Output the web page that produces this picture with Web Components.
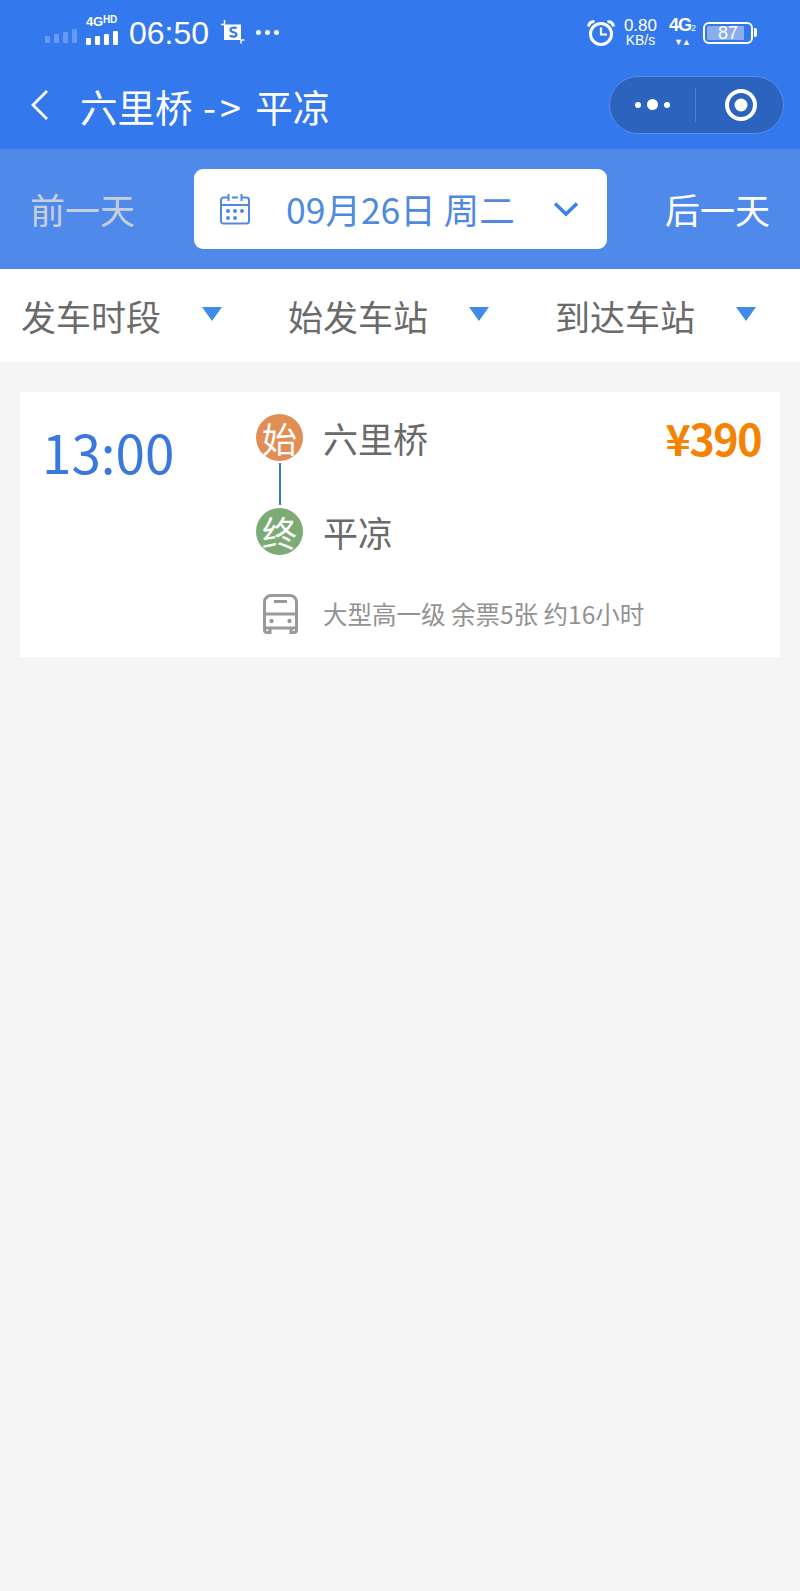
<!DOCTYPE html>
<html lang="zh-CN"><head><meta charset="utf-8"><title>车票</title>
<style>
html,body{margin:0;padding:0;background:#f5f5f5;height:100%}
body{font-family:"Noto Sans CJK SC","Noto Sans",sans-serif;width:800px;min-height:1591px}
</style></head><body>
<app-header></app-header>
<date-bar></date-bar>
<filter-bar></filter-bar>
<ticket-card></ticket-card>
<script>
const def=(name,html)=>customElements.define(name,class extends HTMLElement{
  constructor(){super();this.attachShadow({mode:'open'}).innerHTML=html}
});
def('status-bar',`<style>
:host{display:flex;height:65px;align-items:flex-start;color:#fff;font-family:"Liberation Sans",sans-serif;box-sizing:border-box}
.l,.r{display:flex;align-items:center;height:65px}
.l{padding-left:45px}.r{margin-left:auto;padding-right:43px}
.bars{display:flex;align-items:flex-end;gap:4px;height:15px;margin-top:5px}
.bars i{display:block;width:5px;background:#fff;border-radius:1px}
.faint{opacity:.25}
.sig{display:flex;flex-direction:column;margin-left:9px;width:32px;margin-top:-6px}
.sig b{font-size:13px;line-height:11px;white-space:nowrap;letter-spacing:-.2px}
.sig b small{font-size:10px;vertical-align:3px}
.sig .bars{margin-top:3px}
.time{font-size:32px;line-height:36px;margin-left:11px;font-weight:400}
.dots{margin-left:11px;display:flex;gap:4px}.dots i{width:5px;height:5px;border-radius:50%;background:#fff;display:block}
.net{display:flex;flex-direction:column;align-items:center;margin-left:9px;line-height:16px;font-size:17px;margin-top:-1px}
.net small{font-size:14px;line-height:13px}
.g{display:flex;flex-direction:column;align-items:center;margin-left:12px;width:26px;margin-top:-3px}
.g b{font-size:18px;line-height:19px;letter-spacing:-1px;white-space:nowrap}.g small{font-size:9px;font-weight:400}
.g em{font-size:9px;font-style:normal;line-height:9px;letter-spacing:-1px}
.bat{display:flex;align-items:center;margin-left:8px}
.bat .box{box-sizing:border-box;width:50px;height:22px;border:2px solid #fff;border-radius:6px;padding:2px;display:flex;align-items:center;justify-content:center;font-size:18px;line-height:18px}
.bat .box span{display:block;text-align:center;width:100%;background:linear-gradient(90deg,rgba(225,225,235,.5) 87%,transparent 87%);height:14px;line-height:15px;border-radius:2px}
.bat u{display:block;width:3px;height:9px;background:#fff;border-radius:0 2px 2px 0;margin-left:1px}
</style>
<div class="l">
 <div class="bars faint"><i style="height:7px"></i><i style="height:9px"></i><i style="height:11px"></i><i style="height:14px"></i></div>
 <div class="sig"><b>4G<small>HD</small></b><div class="bars"><i style="height:7px"></i><i style="height:9px"></i><i style="height:11px"></i><i style="height:14px"></i></div></div>
 <span class="time">06:50</span>
 <svg style="margin-left:12px;margin-top:-1px" width="24" height="24" viewBox="0 0 24 24"><path d="M3 4.500h17v15.500H3z" fill="#fff"/><path d="M3.500 0v4.500M0 4.500h3.500M20 20v3.500M20 20h3.500" stroke="#fff" stroke-width="1.500" fill="none"/><path d="M15.500 8.500c-1-1-6-1.500-6 1.500 0 3 6 1.500 6 4.500 0 3-5.500 2.300-6.800 1" stroke="#3478ee" stroke-width="2.200" fill="none"/></svg>
 <div class="dots"><i></i><i></i><i></i></div>
</div>
<div class="r">
 <svg width="28" height="28" viewBox="0 0 28 28" fill="none" stroke="#fff"><circle cx="14" cy="15" r="10.500" stroke-width="3"/><path d="M14 8.500V15.500H20" stroke-width="2.200"/><path d="M1.500 7.500C2 4 4.500 2.500 7.500 2.500M26.500 7.500C26 4 23.500 2.500 20.500 2.500" stroke-width="3"/></svg>
 <div class="net"><span>0.80</span><small>KB/s</small></div>
 <div class="g"><b>4G<small>2</small></b><em>▼▲</em></div>
 <div class="bat"><div class="box"><span>87</span></div><u></u></div>
</div>`);
def('nav-bar',`<style>
:host{display:flex;height:84px;align-items:center;color:#fff;box-sizing:border-box;padding-left:30px}
svg{display:block;flex:none}
.t{font-size:37.500px;line-height:44px;margin-left:30px;margin-top:-3px;font-weight:400;white-space:pre;word-spacing:2px}
.t i{font-style:normal;letter-spacing:4px}
.cap{margin-left:auto;margin-right:16px;margin-top:-5px;box-sizing:border-box;width:175px;height:58px;border-radius:29px;background:#2c63bf;border:1px solid #5b8de0;display:flex;align-items:center}
.a,.b{flex:1;display:flex;align-items:center;justify-content:center;height:34px}
.a{gap:6px;border-right:1px solid #4d7fd2}
.a i{display:block;background:#fff;border-radius:50%;width:6px;height:6px}.a i.m{width:11px;height:11px}
.b{padding-left:3px}
.b svg{display:block}
</style>
<svg width="20" height="34" viewBox="0 0 20 34" fill="none" stroke="#fff" stroke-width="2.800" style="margin-top:-5px"><path d="M17 3 L3 17 L17 31"/></svg>
<span class="t">六里桥 <i>-&gt;</i> 平凉</span>
<div class="cap"><div class="a"><i></i><i class="m"></i><i></i></div><div class="b"><svg width="34" height="34" viewBox="0 0 34 34"><circle cx="17" cy="17" r="14" fill="none" stroke="#fff" stroke-width="4"/><circle cx="17" cy="17" r="6.500" fill="#fff"/></svg></div></div>`);
def('app-header',`<style>:host{display:block;background:#3478ee;height:149px}</style><status-bar></status-bar><nav-bar></nav-bar>`);
def('date-bar',`<style>
:host{display:flex;align-items:center;height:120px;background:#4f8aea;box-sizing:border-box;padding:0 30px 0 30px;font-size:35px;font-weight:400}
.p{color:#c6d0dd;width:164px;line-height:50px}
.n{color:#fff;margin-left:auto;line-height:50px}
.d{box-sizing:border-box;width:413px;height:80px;background:#fff;border-radius:9px;display:flex;align-items:center;padding-left:26px;color:#4f8ae0}
.d span{font-size:35.500px;margin-left:36px;line-height:50px;white-space:pre}
.c{margin-left:auto;margin-right:28px;display:block}
</style>
<span class="p">前一天</span>
<div class="d">
 <svg width="30" height="32" viewBox="0 0 30 32" fill="none" stroke="#4f8ae0" stroke-width="2"><path d="M8 4.500H3.500A2.500 2.500 0 0 0 1 7V28a2.500 2.500 0 0 0 2.500 2.500h23A2.500 2.500 0 0 0 29 28V7a2.500 2.500 0 0 0-2.500-2.500H22M12 4.500h6M8.500 1v7M21.500 1v7M1 12h28"/><g fill="#4f8ae0" stroke="none"><circle cx="8" cy="18" r="2"/><circle cx="15" cy="18" r="2"/><circle cx="22" cy="18" r="2"/><circle cx="8" cy="25" r="2"/><circle cx="15" cy="25" r="2"/></g></svg>
 <span>09月26日 周二</span>
 <svg class="c" width="26" height="16" viewBox="0 0 26 16" fill="none" stroke="#3a82e4" stroke-width="3.500"><path d="M2 2.500 13 13 24 2.500"/></svg>
</div>
<span class="n">后一天</span>`);
def('filter-item',`<style>
:host{display:flex;flex:none;align-items:center;color:#6a6a6a;font-size:35px;font-weight:400;line-height:50px;width:267px;box-sizing:border-box}
svg{display:block;margin-left:41px;margin-top:-4px}
</style><slot></slot><svg width="20" height="14" viewBox="0 0 20 14"><path d="M0 0H20L10 14Z" fill="#3f8ce8"/></svg>`);
def('filter-bar',`<style>:host{display:flex;height:94px;background:#fff;padding:0 0 0 21px;align-items:center;box-sizing:border-box;border-bottom:1px solid #f2f2f2}</style>
<filter-item>发车时段</filter-item><filter-item>始发车站</filter-item><filter-item>到达车站</filter-item>`);
def('stop-badge',`<style>:host{display:flex;width:47px;height:47px;border-radius:50%;align-items:center;justify-content:center;color:#fff;font-size:35px;font-weight:400;line-height:47px;background:var(--c);flex:none}</style><slot></slot>`);
def('ticket-card',`<style>
:host{display:flex;margin:29px 20px 0;height:265px;background:#fff;box-sizing:border-box;padding:22px 19px 0 24px}
.time{width:214px;flex:none;color:#3a78e0;font-size:53px;font-weight:400;line-height:80px;margin-left:-2px;margin-top:-3px}
.mid{flex:1}
.row{display:flex;align-items:center;height:47px;color:#6a6a6a;font-size:35px;font-weight:400}
.row span{margin-left:20px;line-height:47px;white-space:nowrap}
.row b{margin-left:auto;color:#f58200;font-weight:700;font-size:43px;letter-spacing:-1.500px;line-height:47px}
.line{width:2px;height:42px;background:#3a78d8;margin:2px 0 3px 23px}
.info{display:flex;align-items:center;margin-top:39px;color:#929292;font-size:24.500px;font-weight:400;line-height:40px;white-space:pre}
.info svg{margin-left:6px;margin-right:24px;display:block}
</style>
<div class="time">13:00</div>
<div class="mid">
 <div class="row"><stop-badge style="--c:#e28d53">始</stop-badge><span>六里桥</span><b>¥390</b></div>
 <div class="line"></div>
 <div class="row"><stop-badge style="--c:#7dab76">终</stop-badge><span>平凉</span></div>
 <div class="info"><svg width="37" height="40" viewBox="0 0 37 40" fill="none" stroke="#999" stroke-width="3"><path d="M8 34v4.500h-3A2.500 2.500 0 0 1 2.500 36V8A6.500 6.500 0 0 1 9 1.500H28A6.500 6.500 0 0 1 34.500 8V36a2.500 2.500 0 0 1-2.500 2.500h-3V34"/><path d="M2.500 34H34.500M2.500 20H34.500M12 7.500H25" /><circle cx="9.500" cy="27" r="2.200" fill="#999" stroke="none"/><circle cx="27.500" cy="27" r="2.200" fill="#999" stroke="none"/></svg>大型高一级 余票5张 约16小时</div>
</div>`);
</script>
</body></html>
